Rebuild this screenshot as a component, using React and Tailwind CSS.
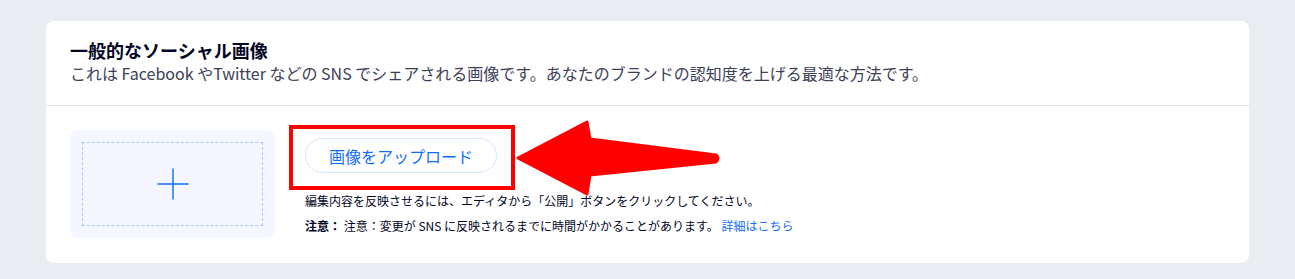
export default function App() {
  const font = { fontFamily: '"Noto Sans CJK JP", "Noto Sans", sans-serif' };
  return (
    <div
      className="relative w-[1295px] h-[279px] bg-[#e9edf2] px-[46px] pt-[21px]"
      style={font}
    >
      <div className="bg-white rounded-[8px] h-[242px] flex flex-col">
        <div className="px-[24px] pt-[17px] pb-[21px] border-b border-[#dfe5eb]">
          <h2 className="text-[18px] leading-[24px] font-bold text-[#000624]">
            一般的なソーシャル画像
          </h2>
          <p className="text-[16px] leading-[22px] text-[#3b4057]">
            これは Facebook やTwitter などの SNS でシェアされる画像です。あなたのブランドの認知度を上げる最適な方法です。
          </p>
        </div>
        <div className="flex px-[24px] pt-[24px] gap-[30px]">
          <div className="w-[205px] h-[108px] bg-[#f4f7ff] rounded-[8px] p-[12px]">
            <div className="w-full h-full border border-dashed border-[#a8c8ff] flex items-center justify-center">
              <svg width="32" height="32" viewBox="0 0 32 32">
                <path d="M16 0.5V31.5M0.5 16H31.5" stroke="#116dff" strokeWidth="1.4" fill="none" />
              </svg>
            </div>
          </div>
          <div className="flex flex-col pt-[8px]">
            <button className="self-start h-[35px] px-[23px] rounded-full border border-[#d6e6fe] text-[#116dff] text-[16px] leading-[20px] bg-white">
              画像をアップロード
            </button>
            <p className="mt-[19px] text-[12px] leading-[18px] text-[#000624]">
              編集内容を反映させるには、エディタから「公開」ボタンをクリックしてください。
            </p>
            <p className="mt-[7px] text-[12px] leading-[18px] text-[#000624]">
              <span className="font-bold">注意：</span> 注意：変更が SNS に反映されるまでに時間がかかることがあります。
              <span className="text-[#116dff]"> 詳細はこちら</span>
            </p>
          </div>
        </div>
      </div>
      <svg
        className="absolute left-0 top-0 pointer-events-none"
        width="1295"
        height="279"
        viewBox="0 0 1295 279"
      >
        <rect x="291" y="127" width="222" height="61" fill="none" stroke="#ff0000" strokeWidth="4" />
        <path
          d="M518 158 L587 122 L590 139 L716 155 Q720 158 716 162 L590 175 L587 194 Z"
          fill="#ff0000"
          stroke="#ff0000"
          strokeWidth="3"
          strokeLinejoin="round"
        />
      </svg>
    </div>
  );
}
